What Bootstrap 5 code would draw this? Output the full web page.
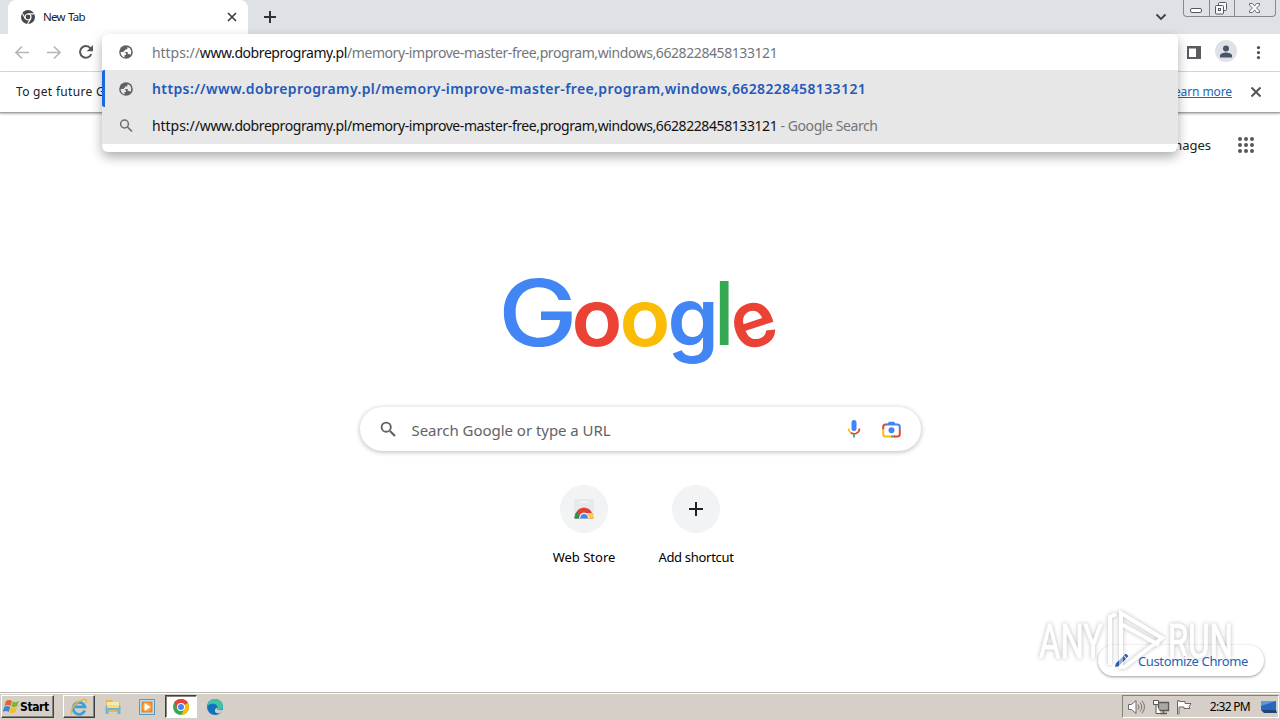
<!DOCTYPE html>
<html lang="en">
<head>
    <meta charset="UTF-8" />
    <meta name="viewport" content="width=device-width, initial-scale=1.0" />
    <title>New Tab</title>
    <link href="https://cdn.jsdelivr.net/npm/bootstrap@5.3.3/dist/css/bootstrap.min.css" rel="stylesheet">
    <style>
        body {
            width: 1280px;
            height: 720px;
            overflow: hidden;
            background-color: #fff;
            color: #202124;
            font-family: "Noto Sans", "Open Sans", sans-serif;
            font-size: 13px;
            line-height: 1;
            white-space: nowrap;
        }

        svg {
            display: block;
            flex-shrink: 0;
        }

        /* tab strip */
        .tab-strip {
            height: 34px;
            background-color: #dee1e6;
        }

        .browser-tab {
            width: 240px;
            height: 34px;
            margin-left: 8px;
            padding: 0 10px 0 13px;
            background-color: #fff;
            border-radius: 8px 8px 0 0;
            font-size: 11.5px;
            letter-spacing: -0.75px;
            word-spacing: 1px;
        }

        .window-buttons {
            width: 93px;
            height: 17px;
            margin-right: 4px;
            border: 1px solid #85888f;
            border-top: 0;
            border-radius: 0 0 4px 4px;
        }

        .window-buttons > div + div {
            border-left: 1px solid #85888f;
        }

        /* toolbar and infobar */
        .tool-row {
            height: 38px;
            border-bottom: 1px solid #d9d9d9;
            padding: 0 13px 0 14px;
        }

        .info-row {
            height: 41px;
            padding: 0 18px 0 16px;
            border-bottom: 1px solid #a2a2a2;
            box-shadow: 0 1px 2px rgba(0, 0, 0, .3);
            font-size: 12px;
            letter-spacing: 0.3px;
        }

        .info-row a {
            color: #1967b8;
            letter-spacing: -0.1px;
        }

        .avatar {
            width: 22px;
            height: 22px;
            margin: 0 14px 0 14px;
            background-color: #dee1e6;
        }

        /* address bar with its suggestions */
        .omnibox {
            position: absolute;
            left: 102px;
            top: 34px;
            width: 1076px;
            height: 118px;
            background-color: #fff;
            border-radius: 6px;
            box-shadow: 0 5px 12px rgba(0, 0, 0, .32);
            font-size: 14px;
            z-index: 5;
        }

        .omni-row {
            height: 37px;
            padding-left: 17px;
        }

        .omni-row.first {
            height: 36px;
        }

        .omni-row > span {
            margin-left: 19px;
            padding-top: 1px;
            color: #111;
            letter-spacing: -0.42px;
        }

        .omni-row .scheme {
            letter-spacing: -0.05px;
        }

        .omni-row.hit {
            background-color: #e7e7e7;
        }

        .omni-row.active {
            padding-left: 14px;
            border-left: 3px solid #1a68e0;
            border-radius: 2px 0 0 2px;
        }

        .omni-row.active > span {
            color: #2459b8;
            font-weight: 600;
            letter-spacing: 0.385px;
        }

        .omni-row i {
            font-style: normal;
            color: #73767a;
        }

        /* new tab page */
        .ntp-head {
            height: 64px;
            padding-right: 26px;
        }

        .search-box {
            width: 561px;
            height: 44px;
            margin-top: 38px;
            padding: 0 20px;
            border-radius: 22px;
            box-shadow: 0 1px 5px rgba(32, 33, 36, .32);
            font-size: 15px;
            letter-spacing: -0.04px;
            color: #5f6368;
        }

        .search-box span {
            padding-top: 2px;
        }

        .tile {
            width: 112px;
        }

        .tile-icon {
            width: 48px;
            height: 48px;
            margin-bottom: 18px;
            background-color: #f1f3f4;
        }

        .customize {
            position: absolute;
            left: 1098px;
            top: 645px;
            width: 166px;
            height: 31px;
            padding: 2px 0 0 15px;
            border-radius: 16px;
            background-color: #fff;
            box-shadow: 0 1px 3px rgba(0, 0, 0, .4);
            letter-spacing: -0.38px;
            color: #2563b8;
        }

        .watermark {
            position: absolute;
            left: 1030px;
            top: 603px;
            z-index: 4;
            opacity: .5;
            filter: drop-shadow(0 0 2px rgba(0, 0, 0, .55));
        }

        /* taskbar */
        .taskbar {
            height: 28px;
            border-top: 1px solid #b9b8b4;
            box-shadow: inset 0 1px 0 #fff;
            background-color: #d5cfc7;
            padding: 2px 1px 0 1px;
        }

        .start-btn,
        .task-btn {
            height: 23px;
            border: 1px solid;
            border-color: #fff #404040 #404040 #fff;
            box-shadow: inset -1px -1px 0 #87837c;
        }

        .start-btn {
            width: 53px;
            padding-left: 1px;
            font: bold 12px "DejaVu Sans Condensed", "DejaVu Sans", sans-serif;
            letter-spacing: -0.4px;
            color: #000;
        }

        .task-btn {
            width: 32px;
            margin-right: 2px;
        }

        .task-btn.flat {
            border-color: transparent;
            box-shadow: none;
        }

        .task-btn.pressed {
            background-color: #fff;
            border-color: #404040 #fff #fff #404040;
            box-shadow: inset 1px 1px 0 #87837c;
        }

        .tray {
            width: 157px;
            height: 23px;
            border: 1px solid;
            border-color: #87837c #fff #fff #87837c;
            font-size: 12px;
            letter-spacing: -0.7px;
            color: #000;
        }
    </style>
</head>
<body class="d-flex flex-column position-relative">
    <div class="tab-strip d-flex">
        <div class="browser-tab d-flex align-items-center">
            <svg width="14" height="14" viewBox="0 0 14 14">
                <circle cx="7" cy="7" r="7" fill="#45494d"/>
                <circle cx="7" cy="7" r="3" fill="none" stroke="#fff" stroke-width="1.2"/>
                <path d="M7 3.9h6.2M4.3 8.6 1.2 3.2M9.7 8.6l-3.100 5.300" stroke="#fff" stroke-width="1.100"/>
            </svg>
            <span class="ms-2">New Tab</span>
            <svg class="ms-auto" width="12" height="12" viewBox="0 0 12 12"><path d="m2 2 8 8M10 2l-8 8" stroke="#3c4043" stroke-width="1.700"/></svg>
        </div>
        <svg class="ms-3 mt-2" width="12" height="18" viewBox="0 0 12 18"><path d="M6 3v12M0 9h12" stroke="#303236" stroke-width="2"/></svg>
        <svg class="ms-auto me-3" width="12" height="34" viewBox="0 0 12 34"><path d="m1.500 14.500 4.500 4.500 4.500-4.500" fill="none" stroke="#3c4043" stroke-width="1.800"/></svg>
        <div class="window-buttons d-flex">
            <div style="width:25px"><svg width="25" height="16" viewBox="0 0 25 16"><rect x="6.500" y="8.500" width="11" height="4" rx="1.500" fill="#fff" stroke="#55585f"/></svg></div>
            <div style="width:25px"><svg width="24" height="16" viewBox="0 0 24 16"><g fill="#f7f8f9" stroke="#55585f"><rect x="8.500" y="2.500" width="8" height="8" rx="1"/><rect x="5.500" y="5.500" width="8" height="8.500" rx="1"/><rect x="8.500" y="8.500" width="2" height="2"/></g></svg></div>
            <div class="flex-fill"><svg width="40" height="16" viewBox="0 0 40 16"><path d="M14.500 3.500h3l2 2.500 2-2.500h3v1.500L21.500 8l3 3v1.500h-3l-2-2.500-2 2.500h-3V11l3-3-3-3z" fill="#fff" stroke="#6a6d73"/></svg></div>
        </div>
    </div>

    <div class="tool-row d-flex align-items-center">
        <svg width="16" height="16" viewBox="0 0 16 16"><path d="M15 7.500H2M8 1.500l-6 6 6 6" fill="none" stroke="#b4b6b9" stroke-width="1.700"/></svg>
        <svg class="ms-3" width="16" height="16" viewBox="0 0 16 16"><path d="M1 7.500h13M8 1.500l6 6-6 6" fill="none" stroke="#b4b6b9" stroke-width="1.700"/></svg>
        <svg class="ms-3" width="16" height="16" viewBox="0 0 16 16"><path d="M13.300 9A5.800 5.800 0 1 1 12.500 3.400L14 5" fill="none" stroke="#55585c" stroke-width="2"/><path d="M15 0v6.300H8.700z" fill="#55585c"/></svg>
        <svg class="ms-auto" width="14" height="14" viewBox="0 0 14 14"><path d="M0 0h14v13H0zM2 2.500v8.500h7v-8.500z" fill="#5d5a60" fill-rule="evenodd"/></svg>
        <div class="avatar rounded-circle d-flex justify-content-center align-items-center mb-1">
            <svg width="14" height="14" viewBox="0 0 14 14" fill="#46536b"><circle cx="7" cy="4.500" r="3"/><path d="M1 13.500v-2c0-2 4-3 6-3s6 1 6 3v2z"/></svg>
        </div>
        <svg width="16" height="14" viewBox="0 0 16 14" fill="#4d5054"><circle cx="7.500" cy="1.600" r="1.600"/><circle cx="7.500" cy="6.600" r="1.600"/><circle cx="7.500" cy="11.600" r="1.600"/></svg>
    </div>

    <div class="info-row d-flex align-items-center">
        <span>To get future Google Chrome updates, you'll need Windows 10 or later.</span>
        <a href="#" class="ms-auto me-3">Learn more</a>
        <svg width="14" height="12" viewBox="0 0 14 12"><path d="m3.500 1.500 9 9M12.500 1.500l-9 9" stroke="#505357" stroke-width="1.900"/></svg>
    </div>

    <div class="omnibox">
        <div class="omni-row first d-flex align-items-center">
            <svg width="14" height="14" viewBox="0 0 14 14"><circle cx="7" cy="7" r="6.800" fill="#5d6064"/><path d="M1.600 7h3.200q2.200 0 2.200 2v1h-1.500v2.400C3.300 12 1.600 9.800 1.600 7zM8.500 1.900v1.300q0 1.300-1.300 1.300H6v1.300H4.700V7h4v2h1.200q1 0 1.200 1c2-2.300 1.600-6.500-2.600-8.100z" fill="#fff"/></svg>
            <span><i class="scheme">https://</i>www.dobreprogramy.pl<i>/memory-improve-master-free,program,windows,6628228458133121</i></span>
        </div>
        <div class="omni-row hit active d-flex align-items-center">
            <svg width="14" height="14" viewBox="0 0 14 14"><circle cx="7" cy="7" r="6.800" fill="#5d6064"/><path d="M1.600 7h3.200q2.200 0 2.200 2v1h-1.500v2.400C3.300 12 1.600 9.800 1.600 7zM8.500 1.900v1.300q0 1.300-1.300 1.300H6v1.300H4.700V7h4v2h1.200q1 0 1.200 1c2-2.300 1.600-6.500-2.600-8.100z" fill="#e7e7e7"/></svg>
            <span>https://www.dobreprogramy.pl/memory-improve-master-free,program,windows,6628228458133121</span>
        </div>
        <div class="omni-row hit d-flex align-items-center">
            <svg width="14" height="14" viewBox="0 0 14 14"><path d="M8.500 8 13 12.500" stroke="#6a6d71" stroke-width="1.700"/><circle cx="5.500" cy="5" r="3.900" fill="none" stroke="#6a6d71" stroke-width="1.500"/></svg>
            <span><b class="scheme fw-normal">https://</b>www.dobreprogramy.pl/memory-improve-master-free,program,windows,6628228458133121<i> - Google Search</i></span>
        </div>
    </div>

    <main class="flex-fill">
        <div class="ntp-head d-flex align-items-center justify-content-end">
            <span>Images</span>
            <svg width="43" height="16" viewBox="-27 0 43 16" fill="#55585c">
                <circle cx="2" cy="2" r="2"/><circle cx="8" cy="2" r="2"/><circle cx="14" cy="2" r="2"/>
                <circle cx="2" cy="8" r="2"/><circle cx="8" cy="8" r="2"/><circle cx="14" cy="8" r="2"/>
                <circle cx="2" cy="14" r="2"/><circle cx="8" cy="14" r="2"/><circle cx="14" cy="14" r="2"/>
            </svg>
        </div>
        <div class="d-flex flex-column align-items-center" style="padding-top:100px">
            <svg class="overflow-visible" width="272" height="92" viewBox="0 0 272 92" font-family="Inter, sans-serif" font-weight="600" font-size="79">
                <text transform="translate(-6 69) scale(1.16 1)" font-size="92" font-weight="500" fill="#4285f4">G</text>
                <text transform="translate(67.500 68.500) scale(1.06 1)" fill="#ea4335">o</text>
                <text transform="translate(115.500 68.500) scale(1.06 1)" fill="#fbbc05">o</text>
                <text transform="translate(163.500 68.500) scale(1.04 1.03)" fill="#4285f4">g</text>
                <text transform="translate(210 68) scale(.92 1)" font-size="88" font-weight="500" fill="#34a853">l</text>
                <text transform="translate(235 75.500) rotate(-18) scale(.97 1)" fill="#ea4335">e</text>
            </svg>
            <div class="search-box d-flex align-items-center">
                <svg width="16" height="16" viewBox="0 0 16 16"><path d="m10 10 5 5" stroke="#5f6368" stroke-width="2.200"/><circle cx="6.200" cy="6.200" r="4.600" fill="none" stroke="#5f6368" stroke-width="1.900"/></svg>
                <span class="ms-3">Search Google or type a URL</span>
                <svg class="ms-auto" width="14" height="18" viewBox="0 0 14 18"><rect x="4.500" y="0" width="5" height="11" rx="2.500" fill="#4285f4"/><g fill="none" stroke-width="1.700"><path d="M1.500 8.500c0 2 1 3.500 2.300 4.300" stroke="#fbbc05"/><path d="M3.800 12.800c3.500 2.200 8.700.2 8.700-4.300" stroke="#ea4335"/><path d="M7 14v3.500" stroke="#34a853"/></g></svg>
                <svg style="margin-left:21px" width="19" height="17" viewBox="0 0 19 17"><g fill="none" stroke-width="2"><path d="M1.200 8V6q0-2.500 2.500-2.500H5" stroke="#ea4335"/><path d="M4.500 3.500h11q2.300 0 2.300 2.500v3" stroke="#4285f4"/><path d="M1.200 8v5q0 2.500 2.500 2.500H9" stroke="#fbbc05"/><path d="M9 15.500h4" stroke="#34a853"/><path d="M17.800 9v4q0 2.500-2.500 2.500H12" stroke="#ea4335"/></g><path d="M5 3.500 7 .8h5l2 2.700z" fill="#4285f4"/><circle cx="9.500" cy="9.300" r="3" fill="#4285f4"/></svg>
            </div>
            <div class="d-flex text-center text-black" style="margin-top:34px">
                <div class="tile d-flex flex-column align-items-center">
                    <div class="tile-icon rounded-circle d-flex justify-content-center align-items-center">
                        <svg width="24" height="20" viewBox="0 0 24 20"><path d="M2 0h20v19H2z" fill="#e8e9eb"/><path d="M8 2.500h8v1.500H8z" fill="#f6f6f6"/><path d="M2.500 19.500a9.500 11 0 0 1 19 0z" fill="#db4437"/><path d="M2.500 19.500c0-3 .8-5 2-6.500L8.500 19.500z" fill="#0f9d58"/><path d="M21.500 19.500c0-2.500-.5-4.500-1.500-5.500H13l3 5.500z" fill="#ffcd40"/><path d="M7 19.500a5 6 0 0 1 10 0z" fill="#f1f1f1"/><path d="M8.200 19.500a3.900 4.600 0 0 1 7.800 0z" fill="#4285f4"/></svg>
                    </div>
                    <span>Web Store</span>
                </div>
                <div class="tile d-flex flex-column align-items-center">
                    <div class="tile-icon rounded-circle d-flex justify-content-center align-items-center">
                        <svg width="14" height="14" viewBox="0 0 14 14"><path d="M7 0v14M0 7h14" stroke="#202124" stroke-width="2"/></svg>
                    </div>
                    <span style="letter-spacing:-.3px">Add shortcut</span>
                </div>
            </div>
        </div>
    </main>

    <div class="customize d-flex align-items-center">
        <svg width="16" height="16" viewBox="0 0 16 16"><path d="m2 13 .8-3.500 7.500-7.500 2.700 2.700-7.500 7.500zM11 1.300l1.200-1.200q.6-.5 1.200 0l1.500 1.500q.5.600 0 1.200L13.700 4z" fill="#2866c0"/></svg>
        <span style="margin-left:9px">Customize Chrome</span>
    </div>

    <svg class="watermark" width="210" height="80" viewBox="0 0 210 80">
        <g font-family="Roboto, sans-serif" font-size="48" fill="#fff" stroke="#fff">
            <text x="9" y="55" textLength="64" lengthAdjust="spacingAndGlyphs">ANY</text>
            <text x="138" y="55" textLength="65" lengthAdjust="spacingAndGlyphs">RUN</text>
        </g>
        <path d="M80 62V14l6-3M91 66V10l41 25-39 30M91 21l38 21" fill="none" stroke="#fff" stroke-width="4"/>
    </svg>

    <div class="taskbar d-flex">
        <div class="start-btn d-flex align-items-center">
            <svg width="17" height="17" viewBox="0 0 17 17"><path d="M3 3q3-2 6 0L7.500 8q-3-2-6 0z" fill="#e8622c"/><path d="M9.800 3.500q3 1.500 6-.5L14.300 8q-3 2-6 .5z" fill="#7cb53a"/><path d="M1.200 9q3-2 6 0L5.700 14q-3-2-6 0z" fill="#3e87cf"/><path d="M8 9.500q3 1.500 6-.5l-1.500 5q-3 2-6 .5z" fill="#f5bd2b"/></svg>
            <span>Start</span>
        </div>
        <div class="task-btn d-flex justify-content-center align-items-center" style="margin-left:9px">
            <svg width="18" height="18" viewBox="0 0 18 18"><path d="M14.800 12.500A6 6 0 1 1 15 8.800H5" fill="none" stroke="#3a9fdc" stroke-width="2.700"/><path d="M2 16C-1 14 4 5 12 2c5-2 5 1 4 3" fill="none" stroke="#e9b93c" stroke-width="1.500"/></svg>
        </div>
        <div class="task-btn flat d-flex justify-content-center align-items-center">
            <svg width="18" height="18" viewBox="0 0 18 18"><path d="M2 2h6l1 2h7v10H2z" fill="#e5b94f"/><path d="M3 4h12v6H3z" fill="#f9eaa9"/><path d="M1.500 8h15v8h-3v-4h-9v4h-3z" fill="#6fb3d8"/><path d="M3 7h12v3H3z" fill="#f5dc7b"/></svg>
        </div>
        <div class="task-btn flat d-flex justify-content-center align-items-center">
            <svg width="16" height="16" viewBox="0 0 16 16"><path d="M.5.500h15v15H.5z" fill="#b9dff2" stroke="#5798c1"/><path d="M2.500 2.500h11v11h-11z" fill="#ee8421"/><circle cx="8" cy="8" r="4.500" fill="#f8a549"/><path d="m5.500 4 6 4-6 4z" fill="#fff"/></svg>
        </div>
        <div class="task-btn pressed d-flex justify-content-center align-items-center">
            <svg width="16" height="16" viewBox="0 0 16 16"><circle cx="8" cy="8" r="8" fill="#34a853"/><path d="M8 8 1.100 4A8 8 0 0 1 14.900 4z" fill="#ea4335"/><path d="m8 8 6.900-4A8 8 0 0 1 8 16l3.500-6z" fill="#fbbc05"/><path d="m1.100 4 3.400 6H8V4z" fill="#ea4335"/><circle cx="8" cy="8" r="4" fill="#fff"/><circle cx="8" cy="8" r="3" fill="#4285f4"/></svg>
        </div>
        <div class="task-btn flat d-flex justify-content-center align-items-center">
            <svg width="16" height="16" viewBox="0 0 16 16"><circle cx="8" cy="8" r="8" fill="#1472bd"/><path d="M.2 7C1 2.500 4.500 0 8.200 0 13 0 16 3.500 16 7c0 2.500-2 4-4 4-3 0-2-1.500-1.500-2.500C11 6 6 2.500.2 7z" fill="#41c3a5"/><path d="M10 8.500c-1 2.500 2 3.300 5 2.300l.5 1L13 14c-5 1-7-2.500-3-5.500z" fill="#d5cfc7"/></svg>
        </div>
        <div class="tray d-flex align-items-center ms-auto">
            <svg class="ms-1" width="19" height="16" viewBox="0 0 19 16"><path d="M1.500 5.500h3L9 1.500v13l-4.500-4h-3z" fill="#fff" stroke="#6d6a66"/><path d="M11 5.500q2 2.500 0 5M13 3.500q3.500 4.500 0 9M15 1.800q5 6 0 12.400" fill="none" stroke="#77746f"/></svg>
            <svg style="margin-left:7px" width="17" height="16" viewBox="0 0 17 16"><path d="M5.500 3.500h10v8h-10zM7 14.500h7M10.500 12v2" fill="#aaa8a4" stroke="#5b5956" stroke-width="1.300"/><path d="M.5 1.500h5v4h-5zM3 5.500v9h5" fill="#fff" stroke="#5b5956"/></svg>
            <svg style="margin-left:6px" width="17" height="16" viewBox="0 0 17 16"><path d="M1.500 15V1.500h1.500v1h6v2h6l-2 3 1 2H8v-1.500H3V15z" fill="#fff" stroke="#6d6a66"/></svg>
            <span class="ms-auto me-2">2:32 PM</span>
            <svg style="margin-left:2px" width="18" height="14" viewBox="0 0 18 14"><path d="M1 1h15v9H1z" fill="#2767bd"/><path d="M1 1h15L1 6z" fill="#5c9ae0"/><path d="M1 10h15l1 3H4z" fill="#244273"/></svg>
        </div>
    </div>

    <script src="https://cdn.jsdelivr.net/npm/bootstrap@5.3.3/dist/js/bootstrap.bundle.min.js"></script>
</body>
</html>
